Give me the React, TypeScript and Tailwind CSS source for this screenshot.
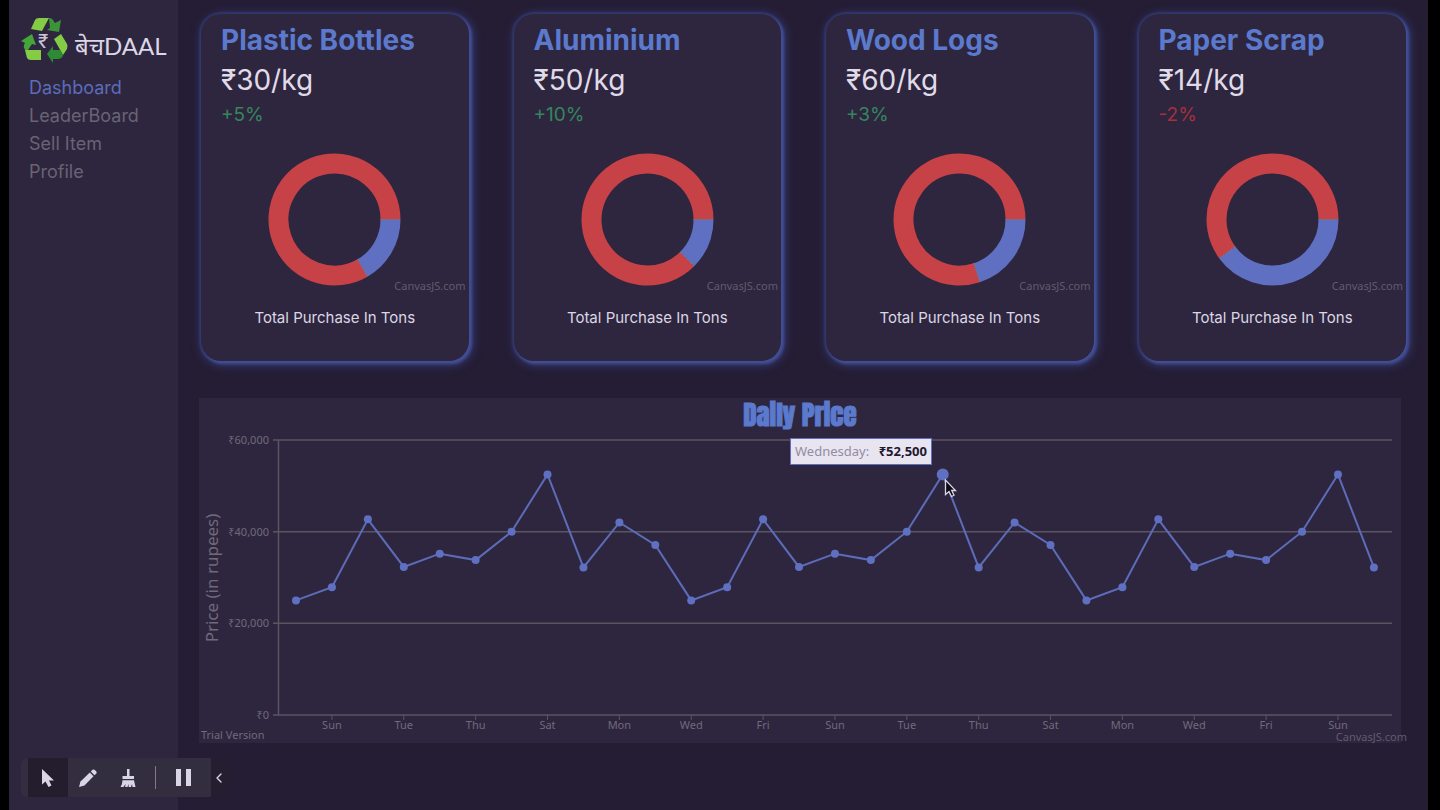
import { ChevronLeft } from "lucide-react"

const links = [
  { title: "Dashboard", route: "#dashboard" },
  { title: "LeaderBoard", route: "#leaderboard" },
  { title: "Sell Item", route: "#sell-item" },
  { title: "Profile", route: "#profile" },
]

const materials = [
  { name: "Plastic Bottles", price: "₹30/kg", change: "+5%", share: 1 / 6 },
  { name: "Aluminium", price: "₹50/kg", change: "+10%", share: 1 / 8 },
  { name: "Wood Logs", price: "₹60/kg", change: "+3%", share: 1 / 5 },
  { name: "Paper Scrap", price: "₹14/kg", change: "-2%", share: 2 / 5 },
]

// prices repeat every 11 days
const cycle = [25000, 27900, 42700, 32300, 35200, 33800, 40000, 52500, 32200, 42000, 37100]
const prices = Array.from({ length: 31 }, (_, i) => cycle[i % cycle.length])
const days = ["Sun", "Tue", "Thu", "Sat", "Mon", "Wed", "Fri"]
const activePoint = 18

const pointX = (i: number) => 97 + i * 35.93
const pointY = (value: number) => 317 - (value / 60000) * 275

function Logo() {
  return (
    <a href="#home" className="flex items-end gap-1.5 pl-3">
      <svg viewBox="0 0 48 46" className="w-12 h-[46px] shrink-0" aria-hidden="true">
        <path d="M10 12 L14 3 Q15 1 18 1 L28 1 L21 14 Z" fill="#84cc45" />
        <path d="M28 1 Q31 1 32 3 L34 6 L40 3 L38 15 L26 13 L29 11 Z" fill="#3b9438" />
        <path d="M33 22 L40 17 L46 27 Q47 29 46 32 L42 38 Z" fill="#84cc45" />
        <path d="M42 38 Q41 42 37 42 L32 42 L32 46 L26 37 L32 29 L32 33 L39 33 Z" fill="#2f8a34" />
        <path d="M4 33 L20 33 L20 43 L10 43 Q7 43 6 41 Z" fill="#84cc45" />
        <path d="M4 33 Q2 30 3 28 L4 26 L0 24 L11 17 L15 28 L11 27 L7 33 Z" fill="#46a53a" />
        <text x="17" y="31" fontSize="19" fill="#c9c4d6" fontFamily="Inter, sans-serif">₹</text>
      </svg>
      <span className="font-['Lato','Noto_Sans',sans-serif] text-2xl leading-[34px] text-[#dcd7e6] whitespace-nowrap">
        बेचDAAL
      </span>
    </a>
  )
}

function Sidebar() {
  return (
    <aside className="w-[169px] shrink-0 bg-[#2e263f] pt-[17px]">
      <Logo />
      <nav className="mt-[11px] pl-5">
        <ul>
          {links.map((item, index) => (
            <li key={item.title} className={`text-lg leading-7 ${index === 0 ? "text-[#5b6db8]" : "text-[#696374]"}`}>
              <a href={item.route}>{item.title}</a>
            </li>
          ))}
        </ul>
      </nav>
    </aside>
  )
}

function Donut({ share }: { share: number }) {
  const angle = share * Math.PI * 2
  const x = Math.cos(angle)
  const y = Math.sin(angle)
  return (
    <svg viewBox="0 0 133 133" className="w-[133px] mx-auto" role="img" aria-label="Total purchase">
      <g transform="translate(66.5 66.5)" fill="none" strokeWidth="20">
        <path d={`M${56 * x} ${56 * y} A56 56 0 1 1 56 0`} stroke="#c74246" />
        <path d={`M56 0 A56 56 0 0 1 ${56 * x} ${56 * y}`} stroke="#5f6fc1" />
        <path
          d={`M46 0 H66 M${46 * x} ${46 * y} L${66 * x} ${66 * y}`}
          stroke="#8f8783"
          strokeWidth="1"
          strokeDasharray="1 1"
        />
      </g>
    </svg>
  )
}

function MaterialCard({ name, price, change, share }: (typeof materials)[number]) {
  return (
    <article className="rounded-[20px] bg-[#2e263f] pt-2 pb-[31px] shadow-[2px_2px_3px_1px_#434f96,0_0_2px_2px_#303468,2px_2px_8px_3px_#31366b]">
      <div className="pl-5">
        <h2 className="font-bold text-[28px] leading-9 text-[#5b7acd] whitespace-nowrap">{name}</h2>
        <p className="text-[28px] leading-[44px] text-[#e0dbe9]">{price}</p>
        <p className={`text-[19px] leading-[26px] ${change.startsWith("-") ? "text-[#a72f3e]" : "text-[#35865c]"}`}>
          {change}
        </p>
      </div>
      <div className="relative mt-[25px]">
        <Donut share={share} />
        <span className="absolute right-[3px] -bottom-2 font-['Noto_Sans',sans-serif] text-[11px] leading-4 text-[#615b6c]">
          CanvasJS.com
        </span>
      </div>
      <p className="mt-5 text-center text-[15px] leading-6 text-[#dcd7e4]">Total Purchase In Tons</p>
    </article>
  )
}

function PriceChart() {
  return (
    <section className="mt-[37px] mr-1.5 bg-[#2e263f]">
      <svg
        viewBox="0 0 1202 345"
        className="block w-full overflow-visible font-['Noto_Sans',sans-serif]"
        role="img"
        aria-label="Daily Price"
      >
        <text
          x="601"
          y="28"
          textAnchor="middle"
          fontSize="27"
          fill="#5b7acd"
          stroke="#5b7acd"
          strokeWidth="1"
          className="font-['Impact','Anton','Liberation_Sans_Narrow',sans-serif]"
        >
          Daily Price
        </text>
        <text transform="translate(19 180) rotate(-90)" textAnchor="middle" fontSize="17" fill="#706a7a">
          Price (in rupees)
        </text>

        {[60000, 40000, 20000, 0].map((value) => (
          <g key={value}>
            <path d={`M74 ${pointY(value)} H1193`} stroke="#5a5563" strokeWidth="1.5" />
            <text x="70" y={pointY(value) + 4} textAnchor="end" fontSize="11" fill="#706a7a">
              ₹{value.toLocaleString("en-US")}
            </text>
          </g>
        ))}
        <path d="M79.500 42 V317" stroke="#5a5563" strokeWidth="1.5" />

        {Array.from({ length: 15 }, (_, i) => (
          <g key={i}>
            <path d={`M${pointX(i * 2 + 1)} 317 v5`} stroke="#5a5563" />
            <text x={pointX(i * 2 + 1)} y="331" textAnchor="middle" fontSize="11" fill="#706a7a">
              {days[i % days.length]}
            </text>
          </g>
        ))}

        <polyline
          points={prices.map((value, i) => `${pointX(i)},${pointY(value)}`).join(" ")}
          fill="none"
          stroke="#5c6cb9"
          strokeWidth="2"
        />
        {prices.map((value, i) => (
          <circle key={i} cx={pointX(i)} cy={pointY(value)} r={i === activePoint ? 6 : 4} fill="#5f70c2" />
        ))}

        <text x="2" y="341" fontSize="11" fill="#706a7a">Trial Version</text>
        <text x="1208" y="343" textAnchor="end" fontSize="11" fill="#615b6c">CanvasJS.com</text>

        {/* Tooltip and mouse pointer */}
        <rect x="591.500" y="40.500" width="141" height="26" fill="#e8e4f0" stroke="#5f70c2" />
        <text x="596" y="58" fontSize="13" fill="#928ca3">Wednesday:</text>
        <text x="728" y="58" textAnchor="end" fontSize="13" fontWeight="700" fill="#1f1830">₹52,500</text>
        <path
          d="M746.500 82 V96.500 L750 93.500 L752.500 98.500 L755 97.300 L752.700 92.500 H756.500 Z"
          fill="#0d0916"
          stroke="#dcd7e6"
          strokeWidth="1.3"
        />
      </svg>
    </section>
  )
}

function Toolbar() {
  return (
    <div className="fixed bottom-[13px] left-[21px] flex h-[39px] items-stretch rounded-md overflow-hidden bg-[#332d40] text-[#d9d5e4]">
      <button aria-label="Pointer" className="ml-[7px] w-10 bg-[#231d2e] flex items-center justify-center">
        <svg viewBox="0 0 14 20" className="w-[14px] h-5" fill="currentColor">
          <path d="M1 1 V16.500 L4.500 13.500 L7.500 19 L10.500 17.500 L8 12.500 H13 Z" />
        </svg>
      </button>
      <button aria-label="Pen" className="w-10 flex items-center justify-center">
        <svg viewBox="0 0 20 20" className="w-5 h-5" fill="currentColor">
          <path d="M1 19 L2.500 13.500 L11.800 4.500 L15.500 8.200 L6.500 17.500 Z" />
          <path d="M12.800 3.500 L14.500 1.800 Q15.500 1 16.500 1.800 L18.300 3.600 Q19 4.500 18.300 5.500 L16.500 7.200 Z" />
        </svg>
      </button>
      <button aria-label="Clear" className="w-10 flex items-center justify-center">
        <svg viewBox="0 0 16 20" className="w-4 h-5" fill="currentColor">
          <path d="M7 1 H9.500 V8 H14 V11 H2.500 V8 H7 Z" />
          <path d="M2.500 12.200 H14 L15.500 19 H12.500 L12 16 L11 19 H8.700 L8.500 16 L7.500 19 H5.200 L5.500 16 L3.500 19 H0.500 Q2.500 16 2.500 12.200 Z" />
        </svg>
      </button>
      <span className="ml-[7px] my-2 w-px bg-[#807a8a]" />
      <button aria-label="Pause" className="w-[55px] flex items-center justify-center gap-[5px]">
        <span className="w-[5px] h-[17px] bg-current" />
        <span className="w-[5px] h-[17px] bg-current" />
      </button>
      <button aria-label="Collapse" className="w-[19px] bg-[#251e31] flex items-center">
        <ChevronLeft size={16} />
      </button>
    </div>
  )
}

export default function App() {
  return (
    <div className="min-h-screen flex bg-[#251d34] border-l-[9px] border-r-[12px] border-black font-['Inter',sans-serif]">
      <Sidebar />
      <main className="flex-1 min-w-0 px-[21px] pt-[14px] pb-8">
        <div className="grid grid-cols-4 gap-[45px] pl-0.5 pr-px">
          {materials.map((item) => (
            <MaterialCard key={item.name} {...item} />
          ))}
        </div>
        <PriceChart />
      </main>
      <Toolbar />
    </div>
  )
}
